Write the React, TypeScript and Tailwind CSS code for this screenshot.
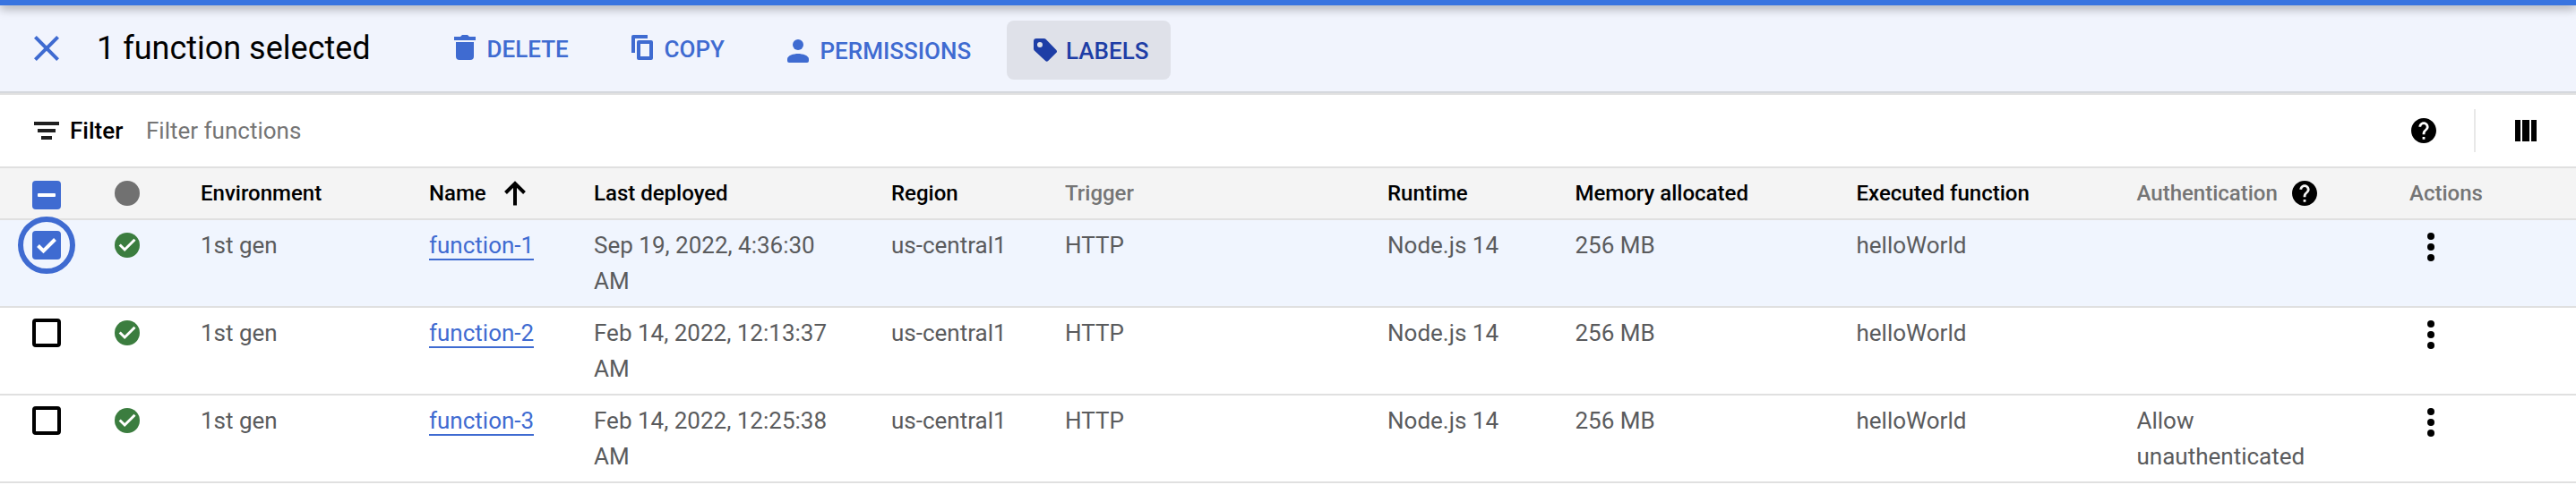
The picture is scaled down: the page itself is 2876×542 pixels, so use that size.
import type { ReactNode } from "react";

const BLUE = "#3f6bd1";

function Icon({ d, className, color }: { d: string; className: string; color: string }) {
  return (
    <svg viewBox="0 0 24 24" className={className} fill={color}>
      <path d={d} />
    </svg>
  );
}

const HELP =
  "M12 2C6.48 2 2 6.48 2 12s4.48 10 10 10 10-4.48 10-10S17.52 2 12 2zm1 17h-2v-2h2v2zm2.07-7.75l-.9.92C13.45 12.9 13 13.5 13 15h-2v-.5c0-1.1.45-2.1 1.17-2.83l1.24-1.26c.37-.36.59-.86.59-1.41 0-1.1-.9-2-2-2s-2 .9-2 2H8c0-2.21 1.79-4 4-4s4 1.79 4 4c0 .88-.36 1.68-.93 2.25z";

function Help({ className }: { className: string }) {
  return (
    <svg viewBox="2 2 20 20" className={className} fill="#000">
      <path d={HELP} />
    </svg>
  );
}

function Checkbox({ state }: { state: "on" | "off" | "mixed" }) {
  if (state === "off") {
    return <div className="size-8 rounded-[4px] border-4 border-black bg-white" />;
  }
  return (
    <div className="flex size-8 items-center justify-center rounded-[4px] bg-[#3f6bd1]">
      {state === "mixed" ? (
        <div className="h-1 w-5 rounded-[1px] bg-white" />
      ) : (
        <svg viewBox="0 0 32 32" className="size-8" fill="none" stroke="#fff" strokeWidth="4">
          <path d="M6.5 16.5L12.5 22.5L25.5 9.5" />
        </svg>
      )}
    </div>
  );
}

function StatusOk() {
  return (
    <svg viewBox="0 0 28 28" className="size-7">
      <circle cx="14" cy="14" r="14" fill="#3b7d3f" />
      <path d="M5.7 13.5L11.2 19L22.5 7.8" fill="none" stroke="#fff" strokeWidth="3" />
    </svg>
  );
}

const COLS =
  "grid grid-cols-[128px_96px_255px_184px_332px_194px_360px_209.5px_314px_313px_304.5px_186px]";

type Row = { name: string; date: string; auth: string; selected?: boolean };
const rows: Row[] = [
  { name: "function-1", date: "Sep 19, 2022, 4:36:30 AM", auth: "", selected: true },
  { name: "function-2", date: "Feb 14, 2022, 12:13:37 AM", auth: "" },
  { name: "function-3", date: "Feb 14, 2022, 12:25:38 AM", auth: "Allow unauthenticated" },
];

function Action({ icon, label, className }: { icon: ReactNode; label: string; className: string }) {
  return (
    <div className={`flex items-center text-[26px] leading-[40px] font-medium ${className}`}>
      {icon}
      <span>{label}</span>
    </div>
  );
}

export default function App() {
  return (
    <div className="h-[542px] w-[2876px] overflow-hidden bg-white font-[Roboto,sans-serif] text-black">
      <div className="relative z-10 h-[6px] bg-[#3874e0] shadow-[0_2px_12px_rgba(0,0,0,0.5)]" />
      <div className="flex h-[100px] items-start border-b-2 border-[#e0e0e0] bg-[#f1f4fd]">
        <div className="flex h-[98px] w-full items-start border-b-2 border-[#d5d8dd]">
          <Icon
            d="M19 6.41L17.59 5 12 10.59 6.41 5 5 6.41 10.59 12 5 17.59 6.41 19 12 13.41 17.59 19 19 17.59 13.41 12z"
            className="mt-6 ml-7 size-12"
            color={BLUE}
          />
          <div className="mt-6 ml-[32px] w-[399px] text-[36px] leading-[48px] whitespace-nowrap">
            1 function selected
          </div>
          <Action
            className="mt-[29px] w-[198px] text-[#3f6bd1]"
            label="DELETE"
            icon={
              <svg viewBox="0 0 24 28" className="-mt-[5px] mr-[12.5px] h-7 w-6" fill={BLUE}>
                <path d="M2 8h20v16a4 4 0 0 1-4 4H6a4 4 0 0 1-4-4zM0 2h7l2-2h6l2 2h7v4H0z" />
              </svg>
            }
          />
          <Action
            className="mt-[29px] w-[174px] text-[#3f6bd1]"
            label="COPY"
            icon={
              <svg viewBox="0 0 24 28" className="-mt-[5px] mr-[12.5px] h-7 w-6" fill={BLUE}>
                <path d="M2 0h16v4H4v16H0V2a2 2 0 0 1 2-2z" />
                <path
                  fillRule="evenodd"
                  d="M8 6h14a2 2 0 0 1 2 2v18a2 2 0 0 1-2 2H8a2 2 0 0 1-2-2V8a2 2 0 0 1 2-2zm2 4v14h10V10z"
                />
              </svg>
            }
          />
          <Action
            className="mt-[31px] w-[245px] text-[#3f6bd1]"
            label="PERMISSIONS"
            icon={
              <svg viewBox="0 0 24 26" className="mr-[12.5px] h-[26px] w-6" fill={BLUE}>
                <circle cx="12" cy="6" r="6" />
                <path d="M0 22c0-4 7-6 12-6s12 2 12 6v2a2 2 0 0 1-2 2H2a2 2 0 0 1-2-2z" />
              </svg>
            }
          />
          <Action
            className="mt-[17px] h-[66px] w-[183px] rounded-lg bg-[#dfe1e9] pt-[2px] pl-[30px] text-[#1e3ea6]"
            label="LABELS"
            icon={
              <svg viewBox="0 0 26 26" className="-mt-[2px] mr-[10px] size-[26px]" fill="#1e3ea6">
                <path
                  fillRule="evenodd"
                  d="M0 3a3 3 0 0 1 3-3h8.600c.8 0 1.500.3 2 .8L25.200 12.800c1.100 1.100 1.100 2.100 0 3.200L16.200 25.100c-.9.9-2.100.9-3 0L.8 13.500C.3 13 0 12.300 0 11.500zM7 4a3 3 0 1 0 0 6 3 3 0 0 0 0-6z"
                />
              </svg>
            }
          />
        </div>
      </div>

      <div className="flex h-20 items-center text-[26px]">
        <div className="ml-[38px] flex w-7 flex-col items-center gap-1">
          <div className="h-1 w-7 bg-[#1f1f1f]" />
          <div className="h-1 w-5 bg-[#1f1f1f]" />
          <div className="h-1 w-3 bg-[#1f1f1f]" />
        </div>
        <div className="ml-3 w-[85px] font-medium">Filter</div>
        <div className="grow text-[#757575]">Filter functions</div>
        <Help className="size-7" />
        <div className="ml-[42px] h-12 w-[2px] bg-[#e8e8e8]" />
        <div className="mr-[44px] ml-[44px] flex h-6 w-6 gap-[2px]">
          <div className="w-[6px] bg-black" />
          <div className="w-2 bg-black" />
          <div className="w-[6px] bg-black" />
        </div>
      </div>

      <div
        className={`${COLS} h-[60px] items-center border-y-2 border-[#e0e0e0] bg-[#f4f4f4] text-[24px] font-medium whitespace-nowrap`}
      >
        <div className="pt-1 pl-9">
          <Checkbox state="mixed" />
        </div>
        <div>
          <div className="size-7 rounded-full bg-[#717171]" />
        </div>
        <div>Environment</div>
        <div className="flex items-center">
          <span className="w-[84px]">Name</span>
          <svg viewBox="0 0 24 28" className="h-7 w-6" fill="none" stroke="#000" strokeWidth="4">
            <path d="M12 27.500V3M1.500 13.500L12 3L22.500 13.500" />
          </svg>
        </div>
        <div>Last deployed</div>
        <div>Region</div>
        <div className="text-[#757575]">Trigger</div>
        <div>Runtime</div>
        <div>Memory allocated</div>
        <div>Executed function</div>
        <div className="flex items-center text-[#757575]">
          <span className="w-[173.5px]">Authentication</span>
          <Help className="size-7" />
        </div>
        <div className="text-[#757575]">Actions</div>
      </div>

      {rows.map((row) => (
        <div
          key={row.name}
          className={`${COLS} h-[98px] border-b-2 border-[#e0e0e0] pt-2 text-[26px] leading-[40px] text-[#5a5b5d] ${
            row.selected ? "bg-[#f0f5fe]" : "bg-white"
          }`}
        >
          <div className="relative pt-1 pl-9">
            <Checkbox state={row.selected ? "on" : "off"} />
            {row.selected && (
              <div className="absolute -top-3 left-5 size-16 rounded-full border-[6px] border-[#3f6bd1]" />
            )}
          </div>
          <div className="pt-[6px]">
            <StatusOk />
          </div>
          <div>1st gen</div>
          <div>
            <span className="inline-block h-[37px] border-b-2 border-[#3f6bd1] text-[#3f6bd1]">
              {row.name}
            </span>
          </div>
          <div className="w-[290px]">{row.date}</div>
          <div>us-central1</div>
          <div>HTTP</div>
          <div>Node.js 14</div>
          <div>256 MB</div>
          <div>helloWorld</div>
          <div className="w-[220px]">{row.auth}</div>
          <div className="flex flex-col gap-1 pt-[6px] pl-[20px]">
            <div className="size-2 rounded-full bg-black" />
            <div className="size-2 rounded-full bg-black" />
            <div className="size-2 rounded-full bg-black" />
          </div>
        </div>
      ))}
    </div>
  );
}
